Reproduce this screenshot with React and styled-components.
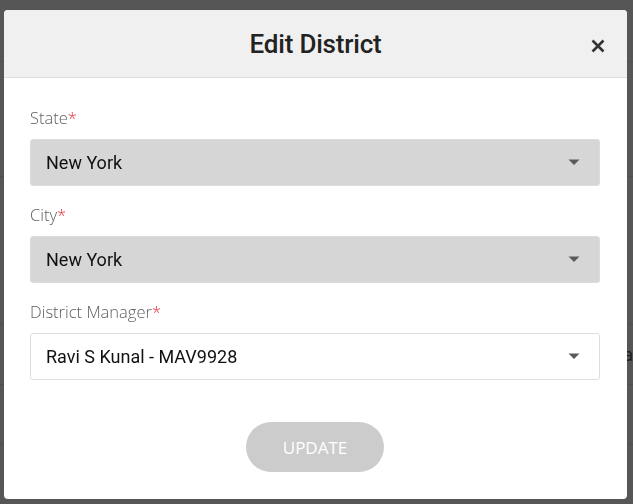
import React from "react";
import styled, { createGlobalStyle } from "styled-components";

const Global = createGlobalStyle`
  html, body { margin: 0; padding: 0; }
  body { background: #565656; font-family: "Open Sans", "Liberation Sans", sans-serif; }
  * { box-sizing: border-box; }
`;

const Page = styled.div`
  width: 633px;
  height: 504px;
  background: #565656;
  display: flex;
  flex-direction: column;
  overflow: hidden;
`;

const PageRow = styled.div`
  height: ${(p) => p.$h}px;
  border-bottom: 1px solid #4f4f4f;
  display: flex;
  justify-content: flex-end;
  align-items: center;
  color: #1e1e1e;
  font-family: Roboto, sans-serif;
  font-size: 18px;
`;

const Overlay = styled.div`
  position: fixed;
  inset: 0;
  display: flex;
  align-items: flex-start;
  justify-content: flex-start;
  padding: 10px 0 0 4px;
`;

const Modal = styled.div`
  width: 623px;
  height: 489px;
  background: #ffffff;
  border-radius: 4px;
  overflow: hidden;
  display: flex;
  flex-direction: column;
`;

const Header = styled.div`
  height: 68px;
  background: #f0f0f0;
  border-bottom: 1px solid #dedede;
  display: flex;
  align-items: center;
  justify-content: center;
  position: relative;
`;

const Title = styled.h2`
  margin: 0;
  font-family: Roboto, "Liberation Sans", sans-serif;
  font-weight: 500;
  font-size: 26px;
  color: #222222;
  letter-spacing: -0.2px;
`;

const Close = styled.button`
  position: absolute;
  right: 21px;
  top: 28px;
  width: 16px;
  height: 16px;
  padding: 0;
  border: none;
  background: transparent;
  display: flex;
  align-items: center;
  justify-content: center;
`;

const Body = styled.div`
  flex: 1;
  padding: 28px 27px 26px 26px;
  display: flex;
  flex-direction: column;
`;

const Field = styled.div`
  display: flex;
  flex-direction: column;
  margin-bottom: 17px;
`;

const Label = styled.label`
  font-family: "Open Sans", "Liberation Sans", sans-serif;
  font-size: 16.5px;
  font-weight: 300;
  line-height: 24px;
  color: #5e5e5e;
  margin-bottom: 9px;
`;

const Req = styled.span`
  color: #e0323c;
`;

const Select = styled.div`
  height: 47px;
  border-radius: 3px;
  border: 1px solid ${(p) => (p.$filled ? "#dcdcdc" : "#dedede")};
  background: ${(p) => (p.$filled ? "#d6d6d6" : "#ffffff")};
  display: flex;
  align-items: center;
  justify-content: space-between;
  padding: 0 19px 0 15px;
  font-family: Roboto, "Liberation Sans", sans-serif;
  font-size: 18px;
  color: #111111;
`;

const Footer = styled.div`
  margin-top: 25px;
  display: flex;
  justify-content: center;
`;

const Button = styled.button`
  width: 138px;
  height: 50px;
  border: none;
  border-radius: 25px;
  background: #cccccc;
  color: #ffffff;
  font-family: "Open Sans", "Liberation Sans", sans-serif;
  font-size: 17px;
  font-weight: 500;
  padding: 0;
`;

const Caret = () => (
  <svg width="12" height="7" viewBox="0 0 12 7">
    <path d="M0.5 0.5 L11.5 0.5 L6 6 Z" fill="#5a5a5a" />
  </svg>
);

const CloseIcon = () => (
  <svg width="14" height="14" viewBox="0 0 14 14">
    <path d="M1.5 1.5 L12.5 12.5 M12.5 1.5 L1.5 12.5" stroke="#333" strokeWidth="2.6" strokeLinecap="butt" />
  </svg>
);

const fields = [
  { label: "State", value: "New York", filled: true },
  { label: "City", value: "New York", filled: true },
  { label: "District Manager", value: "Ravi S Kunal - MAV9928", filled: false },
];

export default function App() {
  return (
    <>
      <Global />
      <Page>
        <PageRow $h={62} />
        <PageRow $h={115} />
        <PageRow $h={148} />
        <PageRow $h={60}>Ra</PageRow>
        <PageRow $h={60} />
      </Page>
      <Overlay>
        <Modal>
          <Header>
            <Title>Edit District</Title>
            <Close aria-label="Close">
              <CloseIcon />
            </Close>
          </Header>
          <Body>
            {fields.map((f) => (
              <Field key={f.label}>
                <Label>
                  {f.label}
                  <Req>*</Req>
                </Label>
                <Select $filled={f.filled}>
                  <span>{f.value}</span>
                  <Caret />
                </Select>
              </Field>
            ))}
            <Footer>
              <Button>UPDATE</Button>
            </Footer>
          </Body>
        </Modal>
      </Overlay>
    </>
  );
}
